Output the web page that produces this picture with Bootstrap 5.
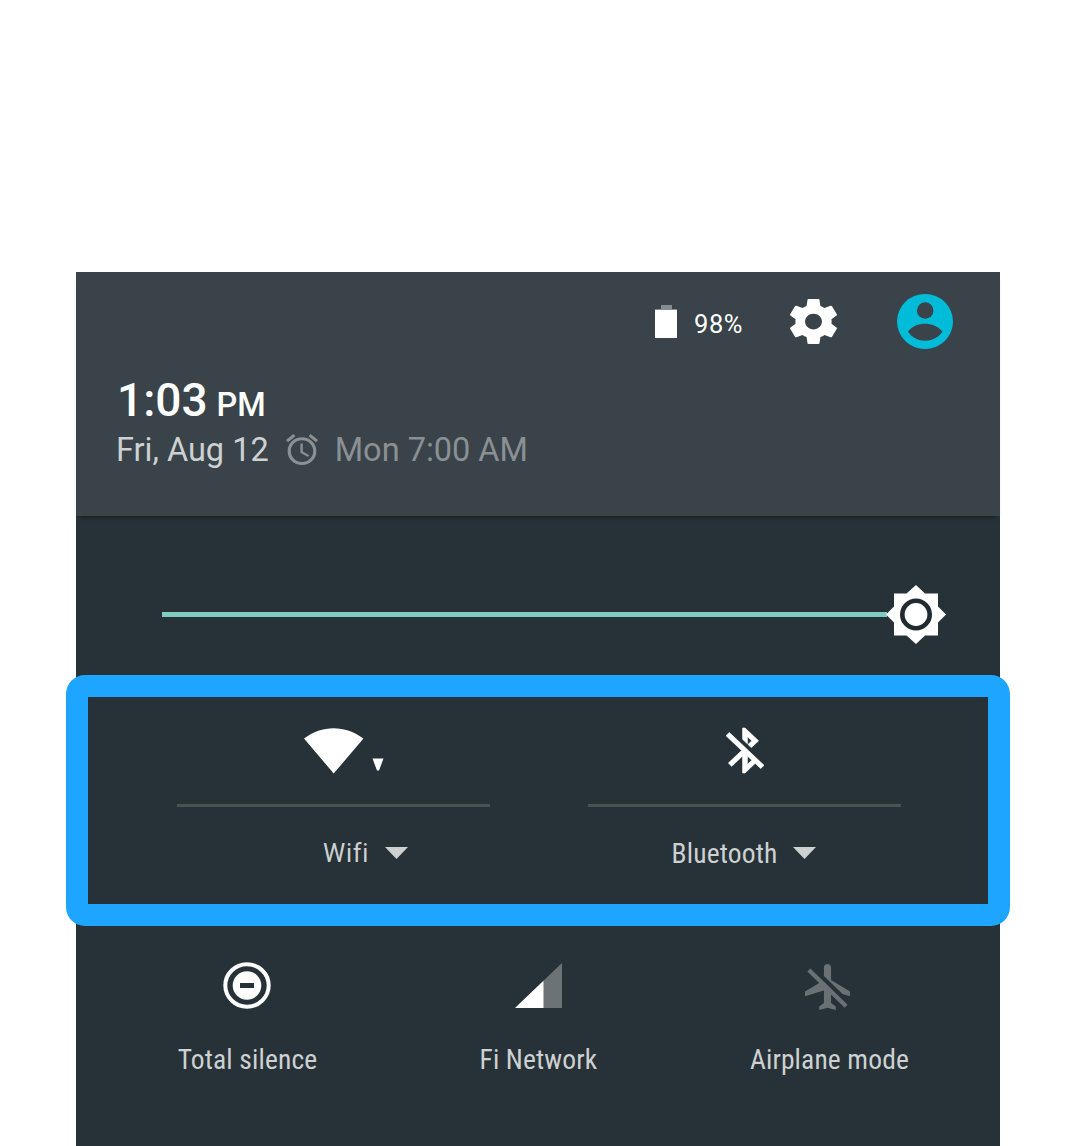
<!DOCTYPE html>
<html lang="en">
<head>
<meta charset="utf-8">
<meta name="viewport" content="width=device-width, initial-scale=1">
<title>Quick settings</title>
<link href="https://cdn.jsdelivr.net/npm/bootstrap@5.3.0/dist/css/bootstrap.min.css" rel="stylesheet">
<style>
body{background:#fff;font-family:Roboto,"Liberation Sans",sans-serif;overflow:hidden}
svg{display:block;flex:none}
.shade{margin:272px 0 0 76px;width:924px;height:874px;background:#273238}
.shade-head{height:244px;background:#394349;padding:22px 47px 0 40px;box-shadow:0 4px 4px -3px rgba(0,0,0,.5);color:#fff}
.status-row{height:55px}
.battery-text{width:49px;font-size:25.5px;letter-spacing:.6px;line-height:30px;margin:4px 47px 0 16px;white-space:nowrap}
.avatar{margin-left:60px}
.clock-row{margin-top:24px;height:54px;line-height:54px;padding-left:1px;font-size:46px;font-weight:500;white-space:nowrap}
.clock-row .ampm{font-size:32.5px;margin-left:9px}
.date-row{height:40px;line-height:40px;margin-top:3px;font-size:32.5px;color:#ced1d2;white-space:nowrap}
.date-row .alarm{margin:-2px 17px 0 17px}
.dim{color:#8a9094}
.slider-row{height:159px;padding:68px 54px 0 86px}
.track{height:5px;background:#80cbc4;margin-right:-2px}
.focus-box{margin:0 -10px;height:251px;border:22px solid #1ea5ff;border-radius:19px;background:#273238;padding:31px 0 0 89px;gap:98px}
.toggle{width:313px}
.toggle-icon{height:76px}
.toggle-icon .wifi{margin-top:-1px}
.rule{height:3px;background:#495257}
.toggle-label{height:34px;line-height:34px;margin-top:30px;color:#ced1d2;gap:17px}
.toggle-label svg{margin:-2px 1px 0 -1px}
.narrow{font-family:"Roboto Condensed",Roboto,sans-serif;font-stretch:75%;font-size:27.5px;letter-spacing:.15px;white-space:nowrap}
.wide{font-size:25px;letter-spacing:.7px;font-variant-ligatures:none}
.wifi-label{padding-left:65px}
.tiles{padding:36px 25px 0 26px}
.tile-icon{height:48px}
.tile-label{height:34px;line-height:34px;margin-top:33px;color:#ced1d2}
.plane{margin:2px 3px 0 0}
</style>
<script src="https://cdn.jsdelivr.net/npm/bootstrap@5.3.0/dist/js/bootstrap.bundle.min.js"></script>
</head>
<body>
<main class="shade">
  <header class="shade-head position-relative">
    <div class="status-row d-flex justify-content-end align-items-center">
      <svg width="23" height="34" viewBox="0 0 23 34"><path fill="#858b8e" d="M6 0h11v4h5v3H0V4h6z"/><path fill="#fff" d="M0 5h22v28H0z"/></svg>
      <span class="battery-text">98%</span>
      <svg class="gear" width="47" height="45" viewBox="2.27 2 19.46 20" preserveAspectRatio="none" fill="#fff"><path d="M19.43 12.98c.04-.32.07-.64.07-.98s-.03-.66-.07-.98l2.110-1.650c.19-.15.24-.42.12-.64l-2-3.460c-.12-.22-.39-.3-.61-.22l-2.490 1c-.52-.4-1.080-.73-1.690-.98l-.38-2.650C14.460 2.180 14.250 2 14 2h-4c-.25 0-.46.18-.49.42l-.38 2.650c-.61.25-1.170.59-1.690.98l-2.490-1c-.23-.09-.49 0-.61.22l-2 3.460c-.13.22-.07.49.12.64l2.110 1.650c-.04.32-.07.65-.07.98s.03.66.07.98l-2.110 1.650c-.19.15-.24.42-.12.64l2 3.460c.12.22.39.3.61.22l2.490-1c.52.4 1.080.73 1.690.98l.38 2.650c.03.24.24.42.49.42h4c.25 0 .46-.18.49-.42l.38-2.650c.61-.25 1.170-.59 1.690-.98l2.490 1c.23.09.49 0 .61-.22l2-3.460c.12-.22.07-.49-.12-.64l-2.110-1.650zM12 15.500c-1.930 0-3.500-1.570-3.500-3.500s1.570-3.500 3.500-3.500 3.500 1.570 3.500 3.500-1.570 3.500-3.500 3.500z"/></svg>
      <svg class="avatar" width="56" height="55" viewBox="0 0 56 55"><ellipse cx="28" cy="27.500" rx="28" ry="27.500" fill="#00bcd9"/><circle cx="28.200" cy="16.500" r="8.300" fill="#394349"/><path fill="#394349" d="M11 37.500C15 32 22 29.700 28 29.700S41 32 45.500 37.500C41 44 34.500 46.700 28 46.700S15 44 11 37.500z"/></svg>
    </div>
    <div class="clock-row">1:03<span class="ampm">PM</span></div>
    <div class="date-row d-flex align-items-center">
      <span>Fri, Aug 12</span>
      <svg class="alarm" width="32" height="31" viewBox="2 1.860 20 20.140" preserveAspectRatio="none" fill="#8a9094"><path d="M22 5.720l-4.600-3.860-1.290 1.530 4.600 3.860L22 5.720zM7.880 3.390L6.600 1.860 2 5.710l1.290 1.530 4.590-3.850zM12.500 8H11v6l4.750 2.850.75-1.230-4-2.370V8zM12 4c-4.970 0-9 4.030-9 9s4.020 9 9 9c4.970 0 9-4.030 9-9s-4.030-9-9-9zm0 16c-3.870 0-7-3.130-7-7s3.130-7 7-7 7 3.130 7 7-3.130 7-7 7z"/></svg>
      <span class="dim">Mon 7:00 AM</span>
    </div>
  </header>

  <section class="slider-row d-flex align-items-start">
    <div class="d-flex align-items-center flex-fill">
      <div class="track flex-fill"></div>
      <svg width="61" height="60" viewBox="0 0 61 60"><path fill="#fff" d="M1 30.500l8-8V9.500h12.500L31 1l9 8.500h13V22.500l8 8-8 8V51.500H40l-9 8.500-9.500-8.500H9V38.500z"/><circle cx="31" cy="30.500" r="13.700" fill="none" stroke="#1f2a31" stroke-width="4.600"/></svg>
    </div>
  </section>

  <section class="focus-box position-relative d-flex">
    <div class="toggle">
      <div class="toggle-icon d-flex align-items-start" style="padding-left:127px">
        <svg class="wifi" width="81" height="47" viewBox="0 0 81 47" fill="#fff"><path d="M0 11.500C18-2.300 41-2.300 59.500 11.500L29.700 46.500zM68.500 31.500h11L75 43.500h-2z"/></svg>
      </div>
      <div class="rule"></div>
      <div class="toggle-label wifi-label d-flex align-items-center justify-content-center">
        <span class="wide">Wifi</span>
        <svg width="23" height="12" viewBox="0 0 23 12"><path fill="#ced1d2" d="M0 0h23L11.500 12z"/></svg>
      </div>
    </div>
    <div class="toggle">
      <div class="toggle-icon d-flex align-items-start" style="padding-left:138px">
        <svg width="38" height="45" viewBox="4 2 16 20" preserveAspectRatio="none" fill="#fff" stroke="#fff" stroke-width=".3" overflow="visible"><path d="M13 5.830l1.880 1.880-1.600 1.600 1.410 1.410 3.020-3.020L12 2h-1v5.030l2 2v-3.200zM5.410 4L4 5.410 10.590 12 5 17.590 6.410 19 11 14.410V22h1l4.290-4.290 2.300 2.290L20 18.590 5.410 4zM13 18.170v-3.760l1.880 1.880L13 18.170z"/></svg>
      </div>
      <div class="rule"></div>
      <div class="toggle-label d-flex align-items-center justify-content-center">
        <span class="narrow">Bluetooth</span>
        <svg width="23" height="12" viewBox="0 0 23 12"><path fill="#ced1d2" d="M0 0h23L11.500 12z"/></svg>
      </div>
    </div>
  </section>

  <section class="tiles row g-0 text-center">
    <div class="col-4">
      <div class="tile-icon d-flex justify-content-center">
        <svg width="48" height="47" viewBox="0 0 48 47"><ellipse cx="24" cy="23.500" rx="21.700" ry="21.200" fill="none" stroke="#fff" stroke-width="4"/><circle cx="24" cy="23.500" r="14.300" fill="#fff"/><path fill="#273238" d="M17 21h14v5H17z"/></svg>
      </div>
      <div class="tile-label narrow">Total silence</div>
    </div>
    <div class="col-4">
      <div class="tile-icon d-flex justify-content-center">
        <svg width="47" height="47" viewBox="0 0 47 47"><path fill="#6b7377" d="M47 1v45H0z"/><path fill="#fff" d="M28.500 18.700V46H0z"/></svg>
      </div>
      <div class="tile-label narrow">Fi Network</div>
    </div>
    <div class="col-4">
      <div class="tile-icon d-flex justify-content-center">
        <svg class="plane" width="45" height="46" viewBox="2 2 19 20" preserveAspectRatio="none" fill="#697175"><path d="M13 9V3.500c0-.83-.67-1.500-1.500-1.500S10 2.670 10 3.500v3.680l7.830 7.830L21 16v-2l-8-5zM3 5.270l4.990 4.990L2 14v2l8-2.500V19l-2 1.500V22l3.500-1 3.500 1v-1.500L13 19v-3.730L18.730 21 20 19.730 4.270 4 3 5.270z"/></svg>
      </div>
      <div class="tile-label narrow">Airplane mode</div>
    </div>
  </section>
</main>
</body>
</html>
